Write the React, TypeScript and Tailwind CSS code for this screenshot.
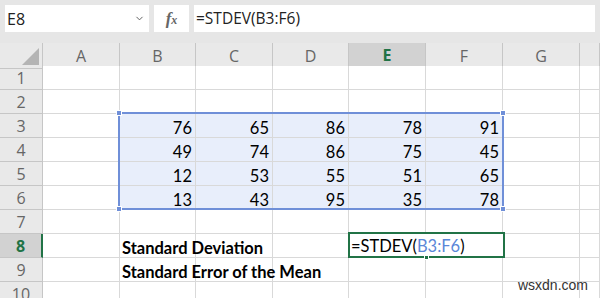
import { ChevronDown } from 'lucide-react';

const cols = ['A', 'B', 'C', 'D', 'E', 'F', 'G', ''];
const data: Record<number, number[]> = {
  3: [76, 65, 86, 78, 91],
  4: [49, 74, 86, 75, 45],
  5: [12, 53, 55, 51, 65],
  6: [13, 43, 95, 35, 78],
};
const rows = [1, 2, 3, 4, 5, 6, 7, 8, 9, 10];
const grid = 'grid grid-cols-[43px_77px_76px_77px_76px_77px_77px_77px_1fr]';
const cellFont = "font-['Lato','Liberation_Sans',sans-serif] text-[16.5px] text-black";

function Cell({ row, col }: { row: number; col: number }) {
  const sel = row >= 3 && row <= 6 && col >= 1 && col <= 5;
  let content: React.ReactNode = null;
  if (sel) content = data[row][col - 1];
  if (col === 1 && row === 8) content = 'Standard Deviation';
  if (col === 1 && row === 9) content = 'Standard Error of the Mean';
  const label = col === 1 && (row === 8 || row === 9);
  return (
    <div
      className={`h-6 border-b border-r border-[#d9d9d9] ${sel ? 'bg-[#e8eefb]' : 'bg-white'} ${
        label ? 'justify-start overflow-visible whitespace-nowrap pl-[2px] font-bold' : 'justify-end pr-[3px]'
      } relative flex items-end pb-[1px] leading-none ${cellFont}`}
    >
      {label ? <span className="relative z-10">{content}</span> : content}
    </div>
  );
}

export default function App() {
  return (
    <div className="relative h-[298px] w-[600px] overflow-hidden bg-white">
      {/* formula bar */}
      <div className="flex h-[43px] items-start gap-[5px] bg-[#e6e6e6] px-[5px] pt-[5px]">
        <div className="flex h-[27px] w-[144px] items-center justify-between bg-white pl-[2px] pr-[4px]">
          <span className="font-['Open_Sans',sans-serif] text-[16px] text-[#222]">E8</span>
          <ChevronDown size={11} strokeWidth={2} className="text-[#555]" />
        </div>
        <div className="flex h-[27px] w-[35px] items-center justify-center bg-white">
          <span className="font-['Liberation_Serif',serif] text-[17px] font-bold italic text-[#666]">
            f<span className="text-[12px]">x</span>
          </span>
        </div>
        <div className="flex h-[27px] flex-1 items-center bg-white pl-[2px]">
          <span className="font-['Open_Sans',sans-serif] text-[15.5px] text-[#222]">=STDEV(B3:F6)</span>
        </div>
      </div>

      {/* column headers */}
      <div className={`${grid} h-[23px] bg-[#e9e9e9]`}>
        <div className="relative border-b border-r border-[#c6c6c6]">
          <div className="absolute bottom-[3px] right-[3px] h-0 w-0 border-b-[17px] border-l-[17px] border-b-[#b4b4b4] border-l-transparent" />
        </div>
        {cols.map((c, i) => (
          <div
            key={i}
            className={`flex items-center justify-center font-['Open_Sans',sans-serif] text-[16px] ${
              c === 'E'
                ? 'border-b-2 border-r border-b-[#217346] border-r-[#c6c6c6] bg-[#d2d2d2] font-bold text-[#217346]'
                : 'border-b border-r border-[#c6c6c6] text-[#666]'
            }`}
          >
            {c}
          </div>
        ))}
      </div>

      {/* rows */}
      {rows.map((r) => (
        <div key={r} className={grid}>
          <div
            className={`flex h-6 items-center justify-center border-b font-['Open_Sans',sans-serif] text-[16px] ${
              r === 8
                ? 'border-r-2 border-b-[#c6c6c6] border-r-[#217346] bg-[#d2d2d2] font-bold text-[#217346]'
                : 'border-r border-[#c6c6c6] bg-[#e9e9e9] text-[#666]'
            }`}
          >
            {r}
          </div>
          {cols.map((_, ci) => (
            <Cell key={ci} row={r} col={ci} />
          ))}
        </div>
      ))}

      {/* selection B3:F6 */}
      <div className="pointer-events-none absolute left-[118px] top-[112px] h-[98px] w-[386px] border-2 border-[#6f8fd8]" />
      <div className="absolute left-[116px] top-[110px] h-[6px] w-[6px] border border-white bg-[#6f8fd8]" />
      <div className="absolute left-[500px] top-[110px] h-[6px] w-[6px] border border-white bg-[#6f8fd8]" />
      <div className="absolute left-[116px] top-[206px] h-[6px] w-[6px] border border-white bg-[#6f8fd8]" />
      <div className="absolute left-[500px] top-[206px] h-[6px] w-[6px] border border-white bg-[#6f8fd8]" />

      {/* active cell editor E8 */}
      <div
        className={`absolute left-[348px] top-[232px] flex h-[26px] w-[157px] items-end border-2 border-[#217346] bg-white pb-[2px] pl-[1px] leading-none ${cellFont}`}
      >
        =STDEV(<span className="text-[#5b87d8]">B3:F6</span>)
      </div>
      <div className="absolute left-[424px] top-[255px] h-[5px] w-[5px] border border-white bg-[#217346]" />

      <div className="absolute bottom-[2px] right-[12px] font-['Liberation_Sans',sans-serif] text-[14px] text-[#333]">
        wsxdn.com
      </div>
    </div>
  );
}
